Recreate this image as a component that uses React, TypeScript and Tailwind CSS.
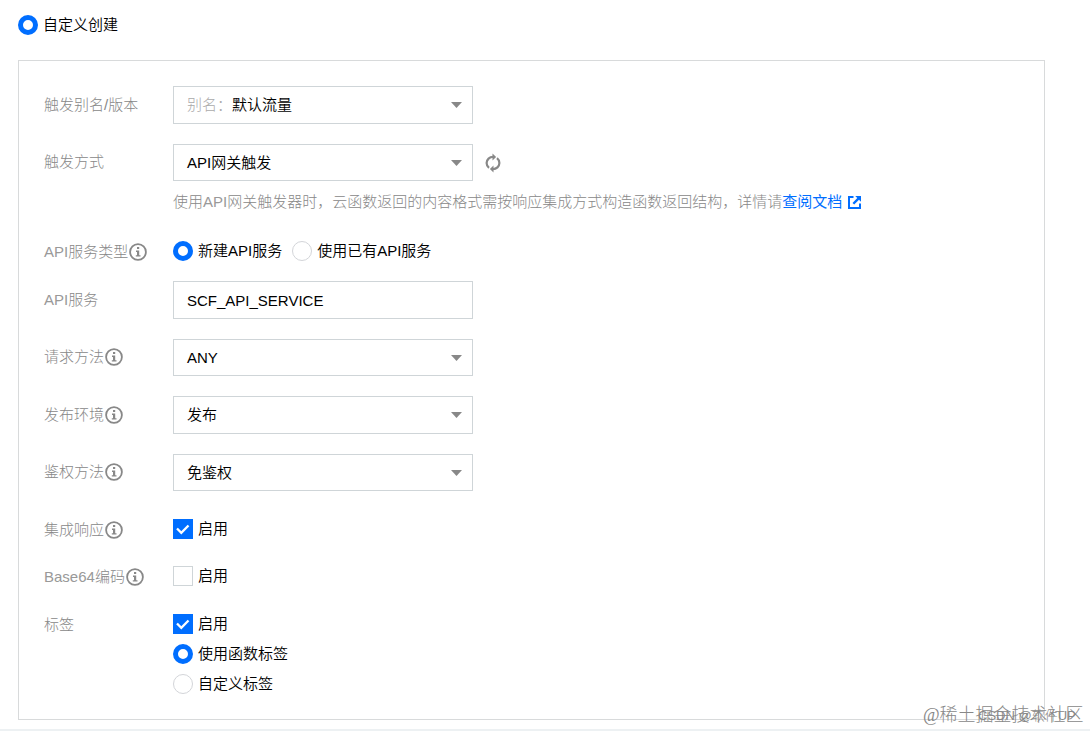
import { useState } from 'react';
import type { ReactNode } from 'react';
import clsx from 'clsx';

interface RowProps {
  label: string;
  info?: boolean;
  className: string;
  labelClass?: string;
  children: ReactNode;
}

function InfoIcon() {
  return (
    <svg className="ml-px size-[18px] shrink-0 text-[#888]" viewBox="0 0 18 18" fill="none">
      <circle cx="9" cy="9" r="7.9" stroke="currentColor" strokeWidth="1.8" />
      <path d="M8 4h2.2v2H8zM7 7.5h3.2v4.7h1.3v1.4H6.8v-1.4H8V8.9H7z" fill="currentColor" />
    </svg>
  );
}

function RefreshIcon() {
  return (
    <svg className="ml-3 h-5 w-4 text-[#888]" viewBox="0 0 16 20" fill="none">
      <path
        d="M4 14.9A6.4 6.4 0 0 1 1.6 10 6.4 6.4 0 0 1 8 3.8M12 5.1A6.4 6.4 0 0 1 14.4 10 6.4 6.4 0 0 1 8 16.2"
        stroke="currentColor"
        strokeWidth="2.2"
      />
      <path d="M7.5.6l3.6 3.5-3.6 3.5zM8.5 12.4l-3.6 3.5 3.6 3.5z" fill="currentColor" />
    </svg>
  );
}

function LinkIcon() {
  return (
    <svg className="ml-1.5 h-[13px] w-[13px] text-[#006eff]" viewBox="0 0 13 13" fill="none">
      <path d="M5.5 1H1v11h11V7.5" stroke="currentColor" strokeWidth="2" />
      <path d="M7.2 0H13v5.8l-2-2-4.8 4.8-1.7-1.7 4.8-4.8z" fill="currentColor" />
    </svg>
  );
}

function Row({ label, info, className, labelClass = 'h-[37px]', children }: RowProps) {
  return (
    <div className={clsx('flex items-start', className)}>
      <div className={clsx('flex w-[129px] shrink-0 items-center font-light whitespace-nowrap text-[#888]', labelClass)}>
        {/* latin runs have no light face, so they get a paler grey */}
        <span>
          {label.split(/([A-Za-z0-9]+)/).map((part, i) => (
            <span key={i} className={i % 2 ? 'text-[#999]' : undefined}>{part}</span>
          ))}
        </span>
        {info && <InfoIcon />}
      </div>
      {children}
    </div>
  );
}

function Select({ prefix, value, className = 'h-[37px]' }: { prefix?: string; value: string; className?: string }) {
  return (
    <button
      type="button"
      className={clsx('flex w-[300px] items-center border border-[#cfd5d8] pr-2.5 pl-[13px] text-left', className)}
    >
      {prefix && <span className="font-light text-[#aaa]">{prefix}</span>}
      <span>{value}</span>
      <svg className="ml-auto h-1.5 w-[11px] text-[#888]" viewBox="0 0 11 6">
        <path d="M0 0h11L5.5 6z" fill="currentColor" />
      </svg>
    </button>
  );
}

function Radio({ label, checked, onChange }: { label: string; checked: boolean; onChange?: () => void }) {
  return (
    <button type="button" onClick={onChange} className="flex h-5 items-center gap-[5px] whitespace-nowrap">
      <span
        className={clsx(
          'size-5 rounded-full',
          checked ? 'border-[5px] border-[#006eff]' : 'border border-[#d3d5d9]'
        )}
      />
      {label}
    </button>
  );
}

function Checkbox({ defaultChecked = false }: { defaultChecked?: boolean }) {
  const [checked, setChecked] = useState(defaultChecked);

  return (
    <button type="button" onClick={() => setChecked(!checked)} className="flex h-5 items-center gap-[5px]">
      <span className={clsx('size-5', checked ? 'bg-[#006eff]' : 'border border-[#cfd5d8]')}>
        {checked && (
          <svg viewBox="0 0 20 20" fill="none">
            <path d="M4 9.5l4.3 4.3L15.5 6.5" stroke="#fff" strokeWidth="2.3" />
          </svg>
        )}
      </span>
      启用
    </button>
  );
}

export default function App() {
  const [service, setService] = useState<'new' | 'existing'>('new');
  const [tag, setTag] = useState<'function' | 'custom'>('function');

  return (
    <div className="relative h-[731px] w-[1090px] overflow-hidden bg-white pt-[15px] pl-[18px] font-['Liberation_Sans','Noto_Sans_CJK_SC',sans-serif] text-[15px] leading-5 font-[350] text-black">
      <Radio label="自定义创建" checked />

      <div className="mt-[25px] h-[660px] w-[1027px] border border-[#d8dadb] pt-[25px] pl-[25px]">
        <Row label="触发别名/版本" className="h-[58px]">
          <Select prefix="别名：" value="默认流量" className="h-[38px]" />
        </Row>

        <Row label="触发方式" className="h-[97px]" labelClass="h-9">
          <div>
            <div className="flex items-center">
              <Select value="API网关触发" />
              <RefreshIcon />
            </div>
            <p className="mt-[11px] flex items-center font-light whitespace-nowrap text-[#888]">
              使用<span className="text-[#999]">API</span>网关触发器时，云函数返回的内容格式需按响应集成方式构造函数返回结构，详情请
              <a href="#" className="font-normal text-[#006eff]">查阅文档</a>
              <LinkIcon />
            </p>
          </div>
        </Row>

        <Row label="API服务类型" info className="h-10" labelClass="h-[22px]">
          <div className="flex gap-2.5">
            <Radio label="新建API服务" checked={service === 'new'} onChange={() => setService('new')} />
            <Radio label="使用已有API服务" checked={service === 'existing'} onChange={() => setService('existing')} />
          </div>
        </Row>

        <Row label="API服务" className="h-[58px]">
          <input
            type="text"
            defaultValue="SCF_API_SERVICE"
            className="h-[38px] w-[300px] border border-[#cfd5d8] px-[13px] outline-none"
          />
        </Row>

        <Row label="请求方法" info className="h-[57px]" labelClass="h-9">
          <Select value="ANY" />
        </Row>
        <Row label="发布环境" info className="h-[58px]">
          <Select value="发布" className="h-[38px]" />
        </Row>
        <Row label="鉴权方法" info className="h-[65px]" labelClass="h-9">
          <Select value="免鉴权" />
        </Row>

        <Row label="集成响应" info className="h-[47px]" labelClass="h-[22px]">
          <Checkbox defaultChecked />
        </Row>
        <Row label="Base64编码" info className="h-12" labelClass="h-[22px]">
          <Checkbox />
        </Row>
        <Row label="标签" className="h-20" labelClass="h-[22px]">
          <div className="flex flex-col items-start gap-2.5">
            <Checkbox defaultChecked />
            <Radio label="使用函数标签" checked={tag === 'function'} onChange={() => setTag('function')} />
            <Radio label="自定义标签" checked={tag === 'custom'} onChange={() => setTag('custom')} />
          </div>
        </Row>
      </div>

      <div className="mt-[9px] -ml-[18px] h-0.5 bg-[#edf1f3]" />

      <span className="absolute top-[706px] left-[978px] text-[13px] leading-5 font-light whitespace-nowrap text-[#888]">
        CSDN @软件UP
      </span>
      <span className="absolute top-[702px] left-[923px] font-['Liberation_Serif','Noto_Sans_CJK_SC',serif] text-[18px] leading-[26px] font-light whitespace-nowrap text-[#888]">
        @稀土掘金技术社区
      </span>
    </div>
  );
}
